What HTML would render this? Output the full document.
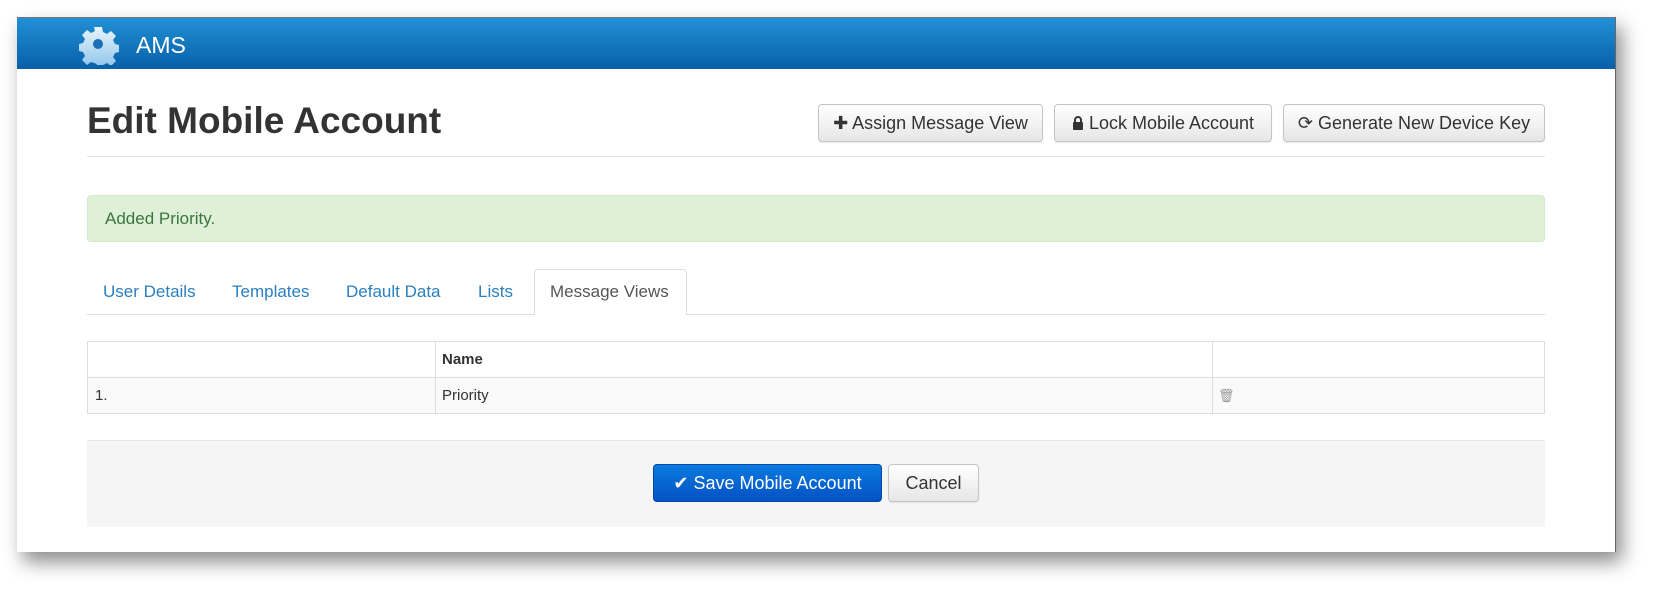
<!DOCTYPE html>
<html><head><style>
*{box-sizing:border-box;margin:0;padding:0}
body{width:1665px;height:600px;background:#fff;font-family:"Liberation Sans",sans-serif;position:relative;overflow:hidden}
.frame{position:absolute;left:17px;top:17px;width:1599px;height:535px;background:#fff;box-shadow:6px 10px 18px rgba(0,0,0,.45);border-right:1px solid #666}
.nav{position:absolute;left:0;top:0;width:100%;height:52px;background:linear-gradient(#2290d6,#0760a8);border-top:1px solid #777}
.abs{position:absolute}
.btn{position:absolute;height:38px;border:1px solid #c4c4c4;border-radius:4px;background:linear-gradient(#fff,#e6e6e6);font-size:18px;color:#333;text-align:center;line-height:36px;box-shadow:0 1px 1px rgba(0,0,0,.08)}
.tab{position:absolute;top:265px;font-size:17px;color:#2a80c0}
td{border:1px solid #ddd}
</style></head><body>
<div class="frame">
 <div class="nav">
  <svg class="abs" style="left:60px;top:7px" width="42" height="40" viewBox="0 0 42 40">
   <defs><linearGradient id="g" x1="0" y1="0" x2="0" y2="1"><stop offset="0" stop-color="#e8f4fc"/><stop offset="1" stop-color="#8cc4ea"/></linearGradient></defs>
   <path d="M17 2h8l1 5 4 2 4-3 5 5-3 4 2 4 4 1v7l-4 1-2 4 3 4-5 5-4-3-4 2-2 4-6-1 2-4-6-2-4 3-5-5 3-4-2-4-4-1v-7l4-1 2-4-3-4 5-5 4 3 4-2z" fill="url(#g)"/>
   <circle cx="21" cy="19" r="5" fill="#1a6fb5"/>
  </svg>
  <div class="abs" style="left:119px;top:14px;font-size:23px;color:#fff">AMS</div>
 </div>
 <div class="abs" style="left:70px;top:83px;font-size:37px;font-weight:bold;color:#333">Edit Mobile Account</div>
 <div class="btn" style="left:801px;top:87px;width:225px">✚ Assign Message View</div>
 <div class="btn" style="left:1037px;top:87px;width:218px"><svg width="12" height="14" viewBox="0 0 12 14" style="vertical-align:-1px"><path d="M3 6V4a3 3 0 0 1 6 0v2" fill="none" stroke="#333" stroke-width="2"/><rect x="1" y="6" width="10" height="8" rx="1" fill="#333"/></svg> Lock Mobile Account</div>
 <div class="btn" style="left:1266px;top:87px;width:262px">⟳ Generate New Device Key</div>
 <div class="abs" style="left:70px;top:139px;width:1458px;height:1px;background:#e6e6e6"></div>
 <div class="abs" style="left:70px;top:178px;width:1458px;height:47px;background:#dff0d8;border:1px solid #d6e9c6;border-radius:4px;color:#3c763d;font-size:17px;line-height:45px;padding-left:17px">Added Priority.</div>
 <div class="tab" style="left:86px">User Details</div>
 <div class="tab" style="left:215px">Templates</div>
 <div class="tab" style="left:329px">Default Data</div>
 <div class="tab" style="left:461px">Lists</div>
 <div class="abs" style="left:70px;top:297px;width:1458px;height:1px;background:#ddd"></div>
 <div class="abs" style="left:517px;top:252px;width:153px;height:46px;background:#fff;border:1px solid #ddd;border-bottom:none;border-radius:4px 4px 0 0;font-size:17px;color:#555;line-height:44px;padding-left:15px">Message Views</div>
 <table class="abs" style="left:70px;top:324px;width:1458px;border-collapse:collapse;font-size:15px;color:#333">
  <tr style="height:36px"><td style="width:348px"></td><td style="width:777px;font-weight:bold;padding-left:6px">Name</td><td></td></tr>
  <tr style="height:36px;background:#f9f9f9"><td style="padding-left:7px">1.</td><td style="padding-left:6px">Priority</td><td style="padding-left:5px;color:#999;font-size:13px">🗑︎</td></tr>
 </table>
 <div class="abs" style="left:70px;top:423px;width:1458px;height:87px;background:#f5f5f5;border-top:1px solid #e5e5e5"></div>
 <div class="abs" style="left:636px;top:447px;width:229px;height:38px;border-radius:4px;background:linear-gradient(#0a7ae0,#0552c4);border:1px solid #0448a8;color:#fff;font-size:18px;line-height:36px;text-align:center">✔ Save Mobile Account</div>
 <div class="btn" style="left:871px;top:447px;width:91px">Cancel</div>
</div>
</body></html>
